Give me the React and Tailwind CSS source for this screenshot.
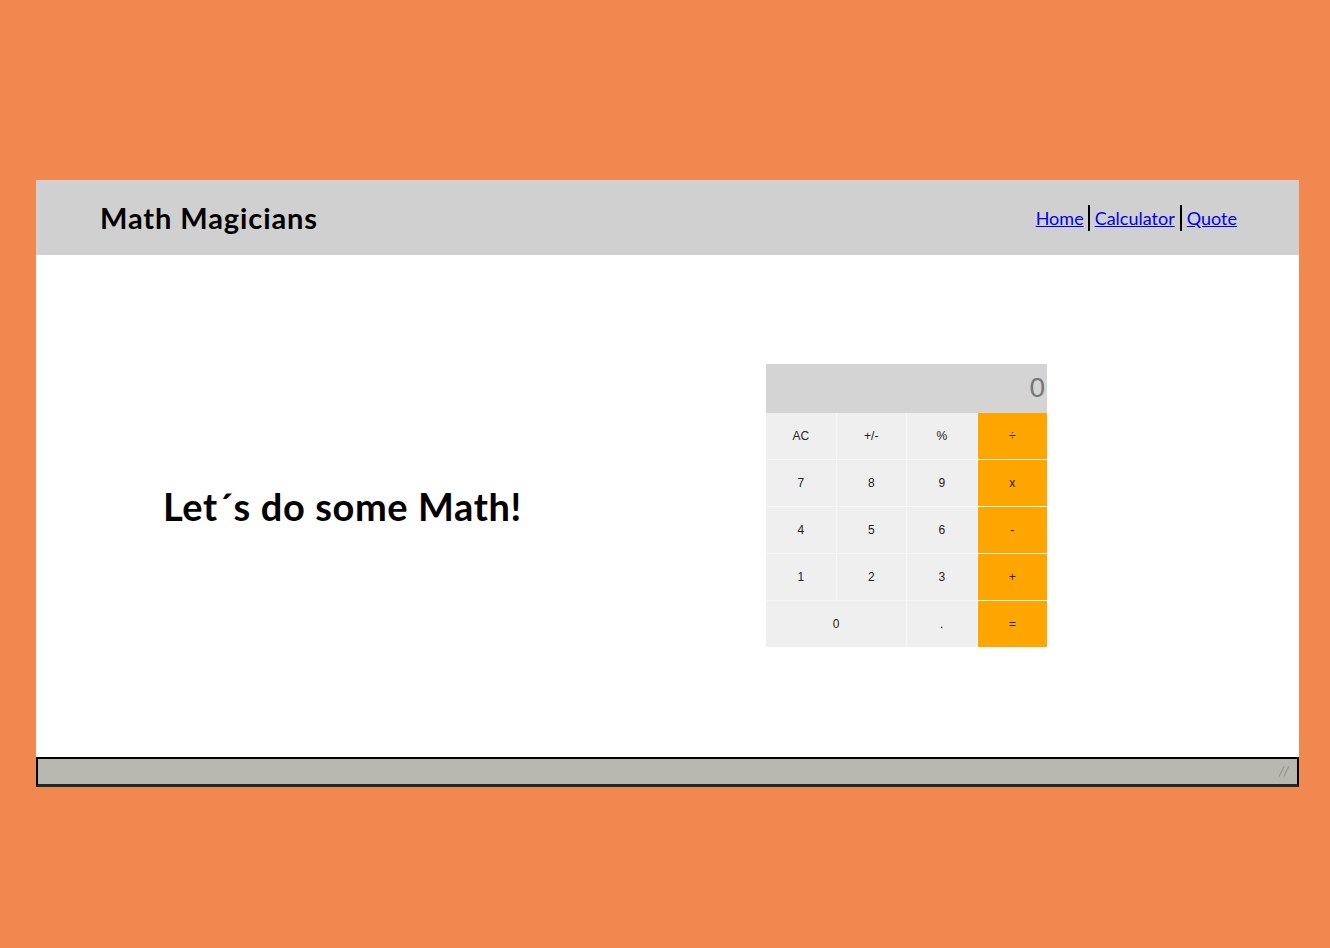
const rows = [
  ["AC", "+/-", "%", "÷"],
  ["7", "8", "9", "x"],
  ["4", "5", "6", "-"],
  ["1", "2", "3", "+"],
];

function Key({ label, op, wide }) {
  return (
    <button
      className={`h-[46px] text-[12px] text-[#222] ${wide ? "col-span-2" : ""} ${
        op ? "bg-[#ffa500]" : "bg-[#efefef]"
      }`}
      style={{ fontFamily: "'Liberation Sans', Arial, sans-serif" }}
    >
      {label}
    </button>
  );
}

function Calculator() {
  return (
    <div className="w-[281px]">
      <div
        className="h-[49px] bg-[#d4d4d4] flex items-center justify-end pr-[2px] text-[28px] text-[#777]"
        style={{ fontFamily: "'Liberation Sans', Arial, sans-serif" }}
      >
        0
      </div>
      <div className="grid grid-cols-4 gap-px bg-[#f8f8f8]">
        {rows.map((row) =>
          row.map((k, i) => <Key key={k} label={k} op={i === 3} />)
        )}
        <Key label="0" wide />
        <Key label="." />
        <Key label="=" op />
      </div>
    </div>
  );
}

export default function App() {
  return (
    <div className="min-h-[948px] bg-[#f08850] pt-[180px] pl-[36px] pr-[31px]" style={{ fontFamily: "Lato, 'Open Sans', sans-serif" }}>
      <div className="bg-white">
        <header className="h-[75px] bg-[#d0d0d0] flex items-center justify-between pl-[64px] pr-[62px]">
          <h1 className="text-[29px] font-bold text-black tracking-[0.9px]">Math Magicians</h1>
          <nav>
            <ul className="flex items-center text-[18px]">
              <li className="border-r-2 border-black pr-[4px] leading-[26px]">
                <a href="#" className="text-[#0000ee] underline">Home</a>
              </li>
              <li className="border-r-2 border-black px-[5px] leading-[26px]">
                <a href="#" className="text-[#0000ee] underline">Calculator</a>
              </li>
              <li className="pl-[5px] leading-[26px]">
                <a href="#" className="text-[#0000ee] underline">Quote</a>
              </li>
            </ul>
          </nav>
        </header>
        <main className="h-[502px] flex items-center">
          <h2 className="ml-[127px] text-[38px] font-bold text-black tracking-[0.6px]">Let´s do some Math!</h2>
          <div className="ml-auto mr-[252px] -mt-[2px]">
            <Calculator />
          </div>
        </main>
        <footer className="h-[30px] border-2 border-black border-b-[3px] border-b-[#1c2a30] bg-[#b8b8b0] flex items-center justify-end pr-[6px]">
          <span className="text-[13px] text-[#888] italic tracking-[2px]">//</span>
        </footer>
      </div>
    </div>
  );
}
